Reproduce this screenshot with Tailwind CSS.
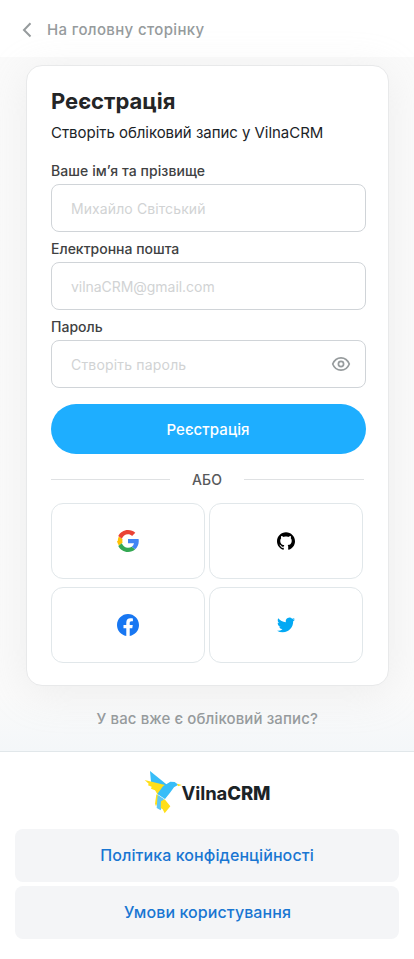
<!DOCTYPE html>
<html lang="uk">
<head>
<meta charset="utf-8">
<meta name="viewport" content="width=device-width, initial-scale=1">
<title>VilnaCRM</title>
<script src="https://cdn.jsdelivr.net/npm/@tailwindcss/browser@4"></script>
</head>
<body class="flex h-[959px] flex-col overflow-hidden bg-white font-['Inter','Noto_Sans',sans-serif] text-[#1b2327]">
<header class="flex h-[57px] shrink-0 items-center bg-white pl-[22px] pt-[2px]">
  <svg class="h-4 w-[10px]" viewBox="0 0 10 16" fill="none" stroke="#969b9d" stroke-width="2" stroke-linecap="butt" stroke-linejoin="miter"><path d="M8.500 1.300 2 8l6.500 6.500"/></svg>
  <a class="ml-[15px] whitespace-nowrap text-[15px] font-medium leading-[18px] tracking-[0.35px] text-[#969b9d]">На головну сторінку</a>
</header>
<main class="flex h-[694px] shrink-0 flex-col items-center bg-linear-to-b from-[#fafafa] from-92% to-[#f4f7f9] pt-2">
  <section class="h-[621px] w-[363px] shrink-0 rounded-[16px] border border-[#e8e9ea] bg-white pl-6 pt-[21px] shadow-[0_7px_40px_rgba(200,200,200,0.24)]">
    <h1 class="whitespace-nowrap pl-[0.5px] text-[22px] font-bold leading-7 text-[#242526]">Реєстрація</h1>
    <p class="mt-[6px] whitespace-nowrap pl-[0.5px] text-[15px] leading-6 tracking-[-0.04px]">Створіть обліковий запис у VilnaCRM</p>
    <form class="mt-[17px] flex w-[315px] flex-col">
      <label class="h-[22px] pl-[0.5px] text-[14px] font-medium leading-[18px] tracking-[0.07px] text-[#404142]">Ваше ім’я та прізвище</label>
      <div class="flex h-12 items-center rounded-lg border border-[#d0d4d8] pl-[19.5px] text-[14px] tracking-[0.1px] text-[#d1d3d4]"><span>Михайло Світський</span></div>
      <label class="mt-2 h-[22px] pl-[0.5px] text-[14px] font-medium leading-[18px] text-[#404142]">Електронна пошта</label>
      <div class="flex h-12 items-center rounded-lg border border-[#d0d4d8] pl-[19.5px] text-[14px] tracking-[-0.04px] text-[#d1d3d4]"><span>vilnaCRM@gmail.com</span></div>
      <label class="mt-2 h-[22px] pl-[0.5px] text-[14px] font-medium leading-[18px] text-[#404142]">Пароль</label>
      <div class="flex h-12 items-center justify-between rounded-lg border border-[#d0d4d8] pl-[19.5px] pr-[14px] text-[14px] tracking-[0.18px] text-[#d1d3d4]"><span>Створіть пароль</span>
        <svg class="h-5 w-5" viewBox="0 0 20 20" fill="none" stroke="#969b9d" stroke-width="1.7"><path d="M1.700 10C3.300 6 6.300 3.800 10 3.800S16.700 6 18.300 10c-1.600 4-4.600 6.200-8.300 6.200S3.300 14 1.700 10Z"/><circle cx="10" cy="10" r="2.600"/></svg>
      </div>
      <button type="button" class="mt-4 h-[50px] rounded-full bg-[#1eaeff] pt-[3px] text-[15px] font-medium tracking-[0.08px] text-white">Реєстрація</button>
    </form>
    <div class="mt-[16px] flex h-[18px] w-[313px] items-center text-[14px] font-medium leading-[18px] text-[#57595b]"><span class="h-px w-[119px] bg-[#dfe1e3]"></span><span class="w-[74px] pl-px pt-px text-center tracking-[0.1px]">АБО</span><span class="h-px flex-1 bg-[#dfe1e3]"></span></div>
    <div class="mt-[15px] grid w-[312px] grid-cols-2 gap-x-1 gap-y-2">
      <div class="flex h-[76px] items-center justify-center rounded-xl border border-[#e1e7ea]"><svg class="h-[22px] w-[22px]" viewBox="2 2 44 44"><path fill="#ffc107" d="M3.500 24c0-3.200.8-6.300 2.100-9l7.500 5.600a12 12 0 0 0 0 6.800L5.700 33A20 20 0 0 1 2 24Z"/><path fill="#ea4335" d="M24 10.700c3.200 0 6 1.100 8.200 3.200l6.400-6.400C34.700 4.100 29.800 2 24 2 15.500 2 8.100 6.900 4.500 14l7.300 5.700c1.700-5.200 6.500-9 12.200-9Z"/><path fill="#34a853" d="M24 46c5.700 0 10.700-1.900 14.400-5.300l-6.900-5.400c-1.900 1.300-4.400 2.100-7.500 2.100-5.700 0-10.600-3.900-12.300-9.100L4.500 34C8.100 41.100 15.500 46 24 46Z"/><path fill="#4285f4" d="M45.500 24.500c0-1.600-.1-3-.4-4.500H24v8.500h12a10 10 0 0 1-4.500 6.800l6.900 5.400c4.300-4 7.100-9.500 7.100-16.200Z"/></svg></div>
      <div class="flex h-[76px] items-center justify-center rounded-xl border border-[#e1e7ea]"><svg class="h-[18px] w-[18px]" viewBox="0 0 24 24"><path d="M12 .297c-6.630 0-12 5.373-12 12 0 5.303 3.438 9.800 8.205 11.385.6.113.820-.258.820-.577 0-.285-.010-1.040-.015-2.040-3.338.724-4.042-1.610-4.042-1.610C4.422 18.070 3.633 17.700 3.633 17.700c-1.087-.744.084-.729.084-.729 1.205.084 1.838 1.236 1.838 1.236 1.070 1.835 2.809 1.305 3.495.998.108-.776.417-1.305.760-1.605-2.665-.300-5.466-1.332-5.466-5.930 0-1.310.465-2.380 1.235-3.220-.135-.303-.540-1.523.105-3.176 0 0 1.005-.322 3.300 1.230.960-.267 1.980-.399 3-.405 1.020.006 2.040.138 3 .405 2.280-1.552 3.285-1.230 3.285-1.230.645 1.653.240 2.873.120 3.176.765.840 1.230 1.910 1.230 3.220 0 4.610-2.805 5.625-5.475 5.920.420.360.810 1.096.810 2.220 0 1.606-.015 2.896-.015 3.286 0 .315.210.690.825.570C20.565 22.092 24 17.592 24 12.297c0-6.627-5.373-12-12-12"/></svg></div>
      <div class="flex h-[76px] items-center justify-center rounded-xl border border-[#e1e7ea]"><svg class="h-[22px] w-[22px]" viewBox="0 0 24 24"><path fill="#1877f2" d="M24 12.073c0-6.627-5.373-12-12-12s-12 5.373-12 12c0 5.990 4.388 10.954 10.125 11.854v-8.385H7.078v-3.470h3.047V9.430c0-3.007 1.792-4.669 4.533-4.669 1.312 0 2.686.235 2.686.235v2.953H15.830c-1.491 0-1.956.925-1.956 1.874v2.250h3.328l-.532 3.470h-2.796v8.385C19.612 23.027 24 18.062 24 12.073z"/></svg></div>
      <div class="flex h-[76px] items-center justify-center rounded-xl border border-[#e1e7ea]"><svg class="h-[18px] w-[18px]" viewBox="0 0 24 24"><path fill="#03a9f4" d="M23.953 4.570a10 10 0 01-2.825.775 4.958 4.958 0 002.163-2.723c-.951.555-2.005.959-3.127 1.184a4.920 4.920 0 00-8.384 4.482C7.690 8.095 4.067 6.130 1.640 3.162a4.822 4.822 0 00-.666 2.475c0 1.710.870 3.213 2.188 4.096a4.904 4.904 0 01-2.228-.616v.060a4.923 4.923 0 003.946 4.827 4.996 4.996 0 01-2.212.085 4.936 4.936 0 004.604 3.417 9.867 9.867 0 01-6.102 2.105c-.390 0-.779-.023-1.170-.067a13.995 13.995 0 007.557 2.209c9.053 0 13.998-7.496 13.998-13.985 0-.210 0-.420-.015-.630A9.935 9.935 0 0024 4.590z"/></svg></div>
    </div>
  </section>
  <a class="mt-[24px] whitespace-nowrap pl-[0.5px] text-[15px] font-medium leading-[18px] tracking-[0.11px] text-[#969b9d]">У вас вже є обліковий запис?</a>
</main>
<footer class="flex flex-1 flex-col items-center border-t border-[#e1e7ea] bg-white px-[15px] pt-[18px]">
  <div class="flex h-11 items-center">
    <svg class="h-11 w-[38px] shrink-0" viewBox="42 30 114 132"><path fill="#38bdf8" d="M60 33 111 74 92 87 63 65Z"/><path fill="#ffdf1b" d="M44 60 105 75 83 104 75 91 63 86 65 80 54 76 56 71Z"/><path fill="#38bdf8" d="M82 102 99 79 121 65 134 66 145 74 132 82 120 98 105 117Z"/><path fill="#ffdf1b" d="M141 71 156 75 144 79Z"/><path fill="#ffdf1b" d="M79 103 91 110 78 139 75 131Z"/><path fill="#5bc7f6" d="M83 105 102 117 92 151 80 144Z"/><path fill="#ffdf1b" d="M93 124 104 118 121 139 104 160 98 148 92 144Z"/></svg>
    <span class="whitespace-nowrap pt-px text-[18.500px] font-bold leading-5 tracking-[-0.100px]">Vilna<span class="font-extrabold">CRM</span></span>
  </div>
  <nav class="mt-[15px] flex w-full flex-col gap-1 text-[16px] font-medium leading-5 tracking-[0.09px] text-[#1976d2]">
    <a class="flex h-[53px] items-center justify-center rounded-lg bg-[#f4f5f7] pb-[2px]"><span>Політика конфіденційності</span></a>
    <a class="flex h-[53px] items-center justify-center rounded-lg bg-[#f4f5f7] pb-[2px] pl-px"><span>Умови користування</span></a>
  </nav>
</footer>
</body>
</html>
